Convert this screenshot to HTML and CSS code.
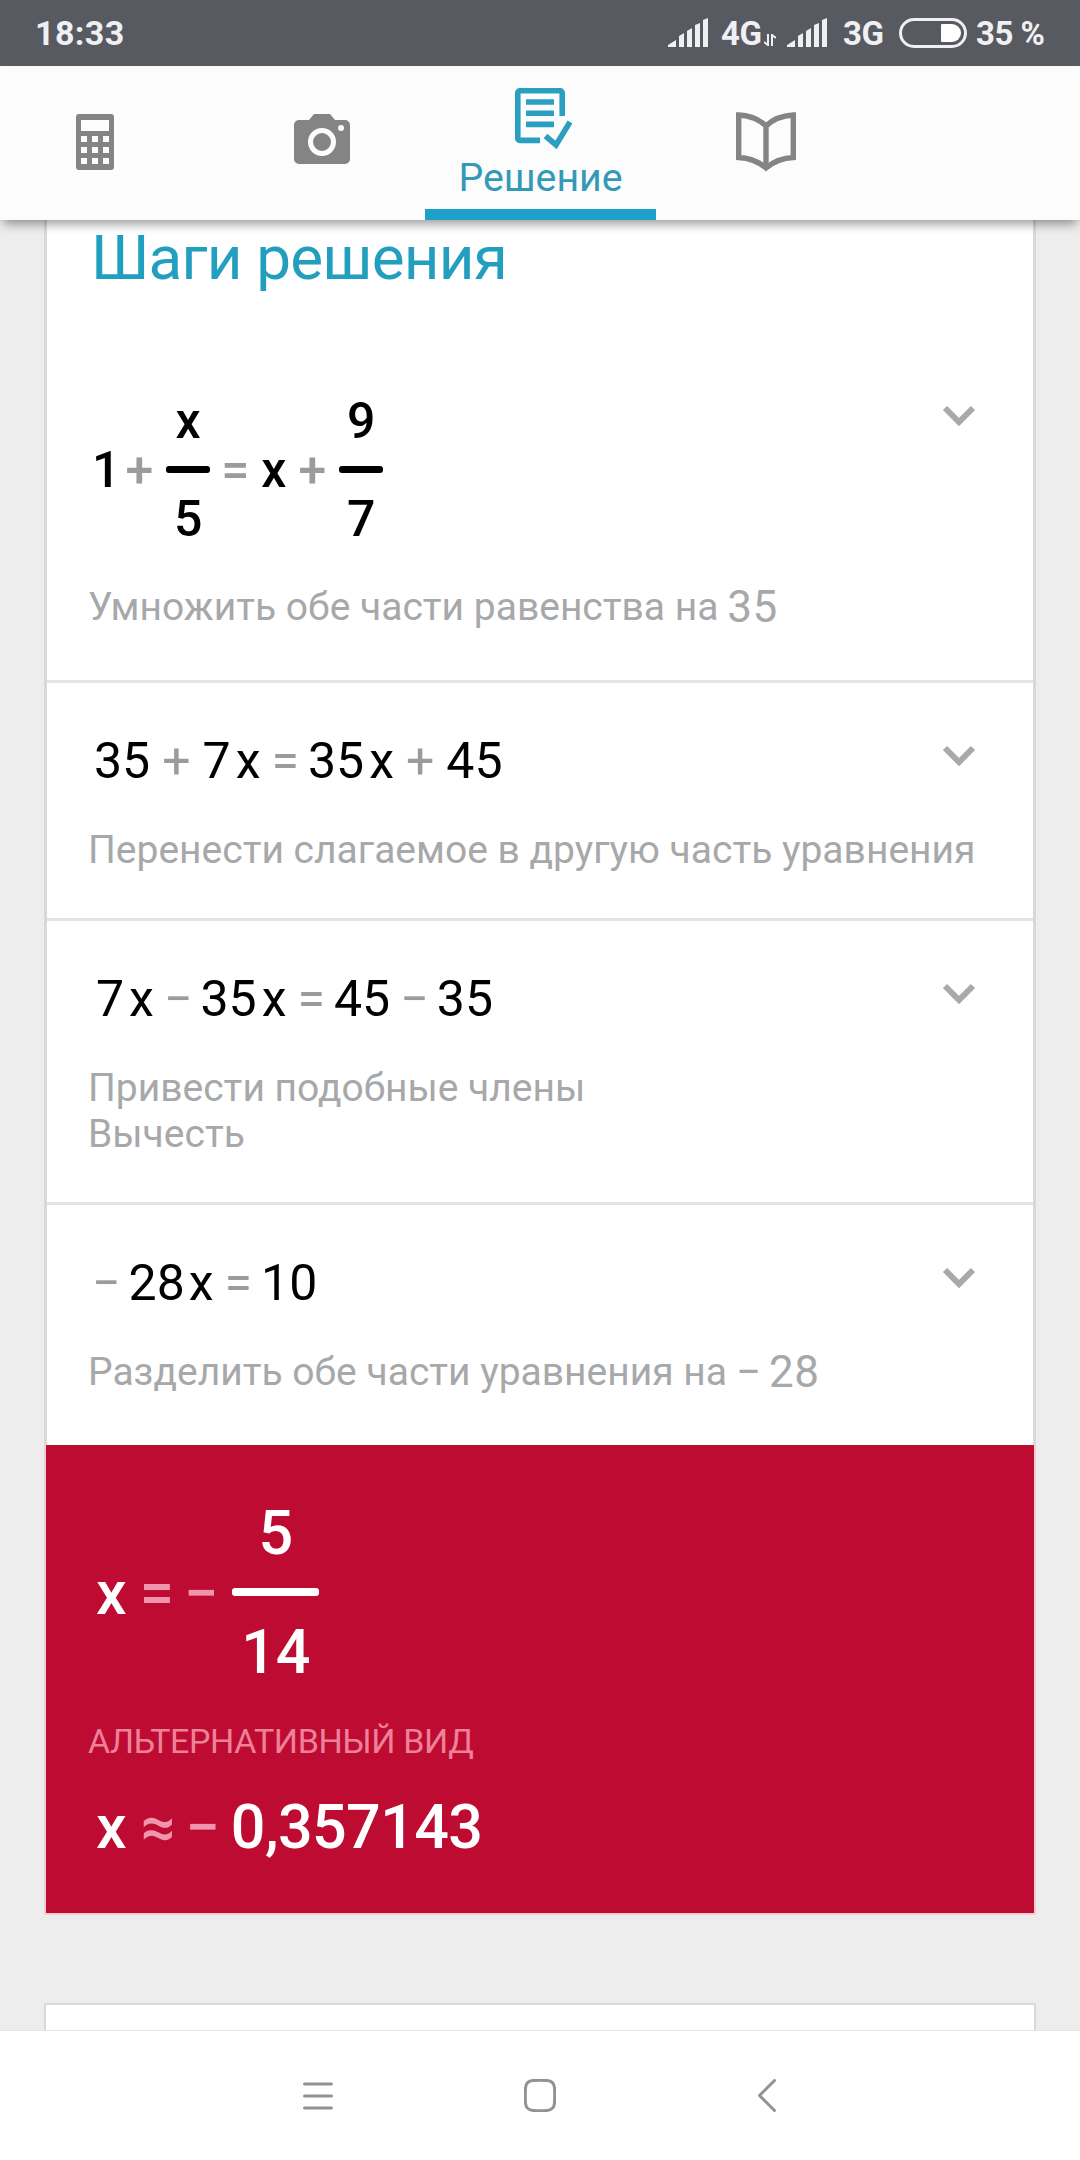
FILE: index.html
```
<!DOCTYPE html>
<html lang="ru">

<head>
    <meta charset="UTF-8">
    <title>Решение</title>
    <link rel="stylesheet" href="styles.css">
</head>

<body>

    <div class="status-bar">
        <span class="time">18:33</span>
        <svg class="signal" width="40" height="29" viewBox="0 0 40 29">
            <path d="M0 29V27L8 22V29ZM11 29V18L16 15V29ZM19 29V13L24 10V29ZM27 29V7L32 5V29ZM35 29V2L40 0V29Z" />
        </svg>
        <span class="net net-4g">4G</span>
        <svg class="updown" width="12" height="12" viewBox="0 0 12 12">
            <path d="M4 0V11L0 8M8 12V1L12 4" />
        </svg>
        <svg class="signal" width="40" height="29" viewBox="0 0 40 29">
            <path d="M0 29V27L8 22V29ZM11 29V18L16 15V29ZM19 29V13L24 10V29ZM27 29V7L32 5V29ZM35 29V2L40 0V29Z" />
        </svg>
        <span class="net net-3g">3G</span>
        <svg class="battery" width="68" height="30" viewBox="0 0 68 30">
            <rect x="1.5" y="1.5" width="65" height="27" rx="13.5" fill="none" stroke="#f0f0f2" stroke-width="3" />
            <path d="M43 6H53A9 9 0 0 1 53 24H43A1 1 0 0 1 42 23V7A1 1 0 0 1 43 6Z" fill="#fff" />
        </svg>
        <span class="net">35 %</span>
    </div>

    <div class="tabs">
        <div class="tab tab-calc">
            <svg width="38" height="56" viewBox="0 0 38 56">
                <rect width="38" height="56" rx="3" fill="#848484" />
                <path fill="#fcfcfc" d="M5 6H33V17H5ZM5 22H11V28H5ZM16 22H22V28H16ZM27 22H33V28H27ZM5 33H11V39H5ZM16 33H22V39H16ZM27 33H33V39H27ZM5 44H11V50H5ZM16 44H22V50H16ZM27 44H33V50H27Z" />
            </svg>
        </div>
        <div class="tab tab-camera">
            <svg width="56" height="50" viewBox="0 0 56 50">
                <path fill="#848484" d="M5 6H15L20 0H36L41 6H51A5 5 0 0 1 56 11V45A5 5 0 0 1 51 50H5A5 5 0 0 1 0 45V11A5 5 0 0 1 5 6Z" />
                <circle cx="28" cy="28" r="11.5" fill="none" stroke="#fcfcfc" stroke-width="5" />
                <circle cx="47" cy="14" r="3" fill="#fcfcfc" />
            </svg>
        </div>
        <div class="tab tab-active">
            <svg width="58" height="61" viewBox="0 0 58 61" fill="none" stroke="#2a9fc0" stroke-width="5.6">
                <path d="M25 52.4H4.8A2 2 0 0 1 2.8 50.4V4.8A2 2 0 0 1 4.8 2.8H45.2A2 2 0 0 1 47.2 4.8V28" />
                <path d="M11 14H39M11 25.2H39M11 36.4H39M30.5 48L41 57L55 34" />
            </svg>
            <span>Решение</span>
        </div>
        <div class="tab tab-book">
            <svg width="60" height="60" viewBox="0 0 60 60" fill="none" stroke="#848484" stroke-width="5.4">
                <path d="M2.7 3Q20 4 30 14Q40 4 57.3 3V45.5Q42 46 30 56Q18 46 2.7 45.5ZM30 13V56" />
            </svg>
        </div>
    </div>

    <div class="content">
        <div class="card steps">
            <h1 class="title">Шаги решения</h1>

            <div class="step">
                <div class="eq bold">
                    <span>1</span>
                    <i class="tight">+</i>
                    <span class="frac"><b>x</b><b class="den">5</b></span>
                    <i class="equal">=</i>
                    <span>x</span>
                    <i>+</i>
                    <span class="frac"><b>9</b><b class="den">7</b></span>
                </div>
                <p class="hint has-math">Умножить обе части равенства на <span>35</span></p>
                <svg class="arrow" width="34" height="22" viewBox="0 0 34 22"><path d="M3 3L17 17L31 3" /></svg>
            </div>

            <div class="step">
                <div class="eq">
                    <span>35</span><i class="plus">+</i><span>7</span><span class="var">x</span><i>=</i><span>35</span><span class="var">x</span><i class="plus">+</i><span>45</span>
                </div>
                <p class="hint">Перенести слагаемое в другую часть уравнения</p>
                <svg class="arrow" width="34" height="22" viewBox="0 0 34 22"><path d="M3 3L17 17L31 3" /></svg>
            </div>

            <div class="step">
                <div class="eq shift">
                    <span>7</span><span class="var">x</span><i class="minus">−</i><span>35</span><span class="var">x</span><i>=</i><span>45</span><i class="minus">−</i><span>35</span>
                </div>
                <p class="hint">Привести подобные члены<br>Вычесть</p>
                <svg class="arrow" width="34" height="22" viewBox="0 0 34 22"><path d="M3 3L17 17L31 3" /></svg>
            </div>

            <div class="step">
                <div class="eq">
                    <i class="minus first">−</i><span>28</span><span class="var">x</span><i>=</i><span>10</span>
                </div>
                <p class="hint has-math">Разделить обе части уравнения на <span>− 28</span></p>
                <svg class="arrow" width="34" height="22" viewBox="0 0 34 22"><path d="M3 3L17 17L31 3" /></svg>
            </div>
        </div>

        <div class="result">
            <div class="eq bold">
                <span>x</span>
                <i>=</i>
                <i>−</i>
                <span class="frac"><b>5</b><b class="den">14</b></span>
            </div>
            <p class="alt">АЛЬТЕРНАТИВНЫЙ ВИД</p>
            <div class="eq bold">
                <span>x</span>
                <i class="approx">≈</i>
                <i>−</i>
                <span class="decimal">0,357143</span>
            </div>
        </div>

        <div class="card next"></div>
    </div>

    <div class="nav">
        <svg width="30" height="28" viewBox="0 0 30 28"><path d="M1.5 2H28.5M1.5 14H28.5M1.5 26H28.5" /></svg>
        <svg width="32" height="33" viewBox="0 0 32 33"><path d="M9 1.5Q16 1 23 1.5Q30 2 30.5 9Q31 16.5 30.5 24Q30 31 23 31.5Q16 32 9 31.5Q2 31 1.5 24Q1 16.5 1.5 9Q2 2 9 1.5Z" /></svg>
        <svg width="20" height="33" viewBox="0 0 20 33"><path d="M17.5 1.5L2.5 16.5L17.5 31.5" /></svg>
    </div>

</body>

</html>
```
FILE: styles.css
```
* {
    margin: 0;
    padding: 0;
    box-sizing: border-box;
}

body {
    display: flex;
    flex-direction: column;
    width: 1080px;
    height: 2160px;
    overflow: hidden;
    background: #ededed;
    font-family: Roboto, "Noto Sans", sans-serif;
}

svg {
    display: block;
    flex: none;
}

/* status bar */
.status-bar {
    display: flex;
    flex: none;
    height: 66px;
    padding-left: 35px;
    background: #585a62;
    color: #f0f0f2;
    font-size: 33px;
    font-weight: 700;
    line-height: 67px;
    white-space: nowrap;
}

.time {
    width: 633px;
    font-size: 34px;
    letter-spacing: .4px;
}

.net {
    letter-spacing: -.5px;
}

.signal {
    margin-top: 18px;
    fill: #f0f0f2;
}

.net-4g {
    width: 43px;
    margin-left: 13px;
}

.updown {
    margin: 34px 11px 0 0;
    fill: none;
    stroke: #f0f0f2;
    stroke-width: 2;
}

.net-3g {
    width: 56px;
    margin-left: 16px;
}

.battery {
    margin: 18px 9px 0 0;
}

/* tabs */
.tabs {
    position: relative;
    z-index: 1;
    display: grid;
    grid-template-columns: 219px 206px 231px 220px;
    flex: none;
    height: 154px;
    background: #fcfcfc;
    box-shadow: 0 7px 10px -3px rgba(0, 0, 0, .4);
}

.tab {
    display: flex;
    flex-direction: column;
    align-items: center;
}

.tab-calc {
    padding: 48px 29px 0 0;
}

.tab-camera {
    padding-top: 48px;
}

.tab-active {
    padding-top: 22px;
    border-bottom: 11px solid #1ea1c8;
    color: #3499b7;
    font-size: 39.3px;
    line-height: 46px;
}

.tab-active svg {
    margin-left: 7px;
}

.tab-active span {
    margin-top: 6px;
}

.tab-book {
    padding-top: 46px;
}

/* content */
.content {
    flex: none;
    height: 1810px;
    padding: 0 44px;
    overflow: hidden;
}

.card {
    border: 2px solid #d8d8d8;
    background: #fff;
}

.steps {
    border-width: 0 3px;
    padding-top: 2px;
}

.title {
    margin: 0 0 49px 44px;
    color: #229ebf;
    font-size: 62px;
    font-weight: 400;
    line-height: 72px;
    letter-spacing: -.8px;
}

.step {
    position: relative;
    padding: 48px 0 45px 41px;
    border-bottom: 3px solid #e3e3e3;
}

.step:last-child {
    border-bottom: none;
}

.arrow {
    position: absolute;
    top: 62px;
    right: 57px;
    fill: none;
    stroke: #a8a9ab;
    stroke-width: 6;
}

.eq {
    display: flex;
    align-items: center;
    padding-left: 6px;
    font-size: 50px;
    line-height: 60px;
    white-space: nowrap;
}

.eq.shift {
    padding-left: 8px;
}

.eq i {
    margin: 0 9px 0 11px;
    color: #9b9b9b;
    font-style: normal;
}

.eq .plus {
    margin: 0 12px;
}

.eq .minus {
    margin: 0 8px 0 10px;
}

.eq .first {
    margin-left: -2px;
}

.var {
    margin-left: 5px;
}

.first ~ .var {
    margin-left: 4px;
}

.eq.bold {
    padding-left: 4px;
    font-weight: 500;
}

.eq.bold i {
    margin: 0 13px 0 12px;
}

.eq.bold .tight {
    margin-left: 5px;
}

.eq.bold .equal {
    margin: 0 12px 0 11px;
}

.frac {
    display: flex;
    flex-direction: column;
    align-items: center;
    min-width: 44px;
}

.frac b {
    font-weight: 500;
}

.frac::before {
    content: "";
    order: 1;
    align-self: stretch;
    height: 7px;
    margin: 15px 0 16px;
    border-radius: 3px;
    background: #000;
}

.frac .den {
    order: 2;
}

.hint {
    margin-top: 36px;
    color: #a7a8a9;
    font-size: 39px;
    line-height: 46px;
    white-space: nowrap;
}

.bold + .hint {
    margin-top: 35px;
}

.has-math {
    padding-bottom: 5px;
}

.has-math span {
    margin-left: -1px;
    font-size: 44px;
    line-height: 0;
    letter-spacing: .6px;
    word-spacing: -4px;
    vertical-align: -2px;
}

/* answer */
.result {
    height: 470px;
    padding: 52px 0 0 42px;
    border: 2px solid #f4cdd5;
    border-top: none;
    background: #be0b31;
    color: #fff;
}

.result .eq {
    padding-left: 8px;
    font-size: 61px;
    line-height: 72px;
}

.result .eq i {
    margin: 0 0 0 13px;
    color: #f195ac;
}

.result .eq .approx {
    margin-left: 14px;
}

.result .eq i + i {
    margin: 0 9px 0 10px;
}

.result .frac {
    min-width: 87px;
    margin-left: 5px;
}

.result .frac::before {
    height: 8px;
    margin: 19px 0 20px;
    background: #fff;
}

.decimal {
    margin-left: 2px;
    letter-spacing: -.6px;
}

.alt {
    margin: 33px 0 30px;
    color: #ee819a;
    font-size: 34px;
    line-height: 40px;
    letter-spacing: -.4px;
}

.next {
    height: 100px;
    margin-top: 88px;
}

/* bottom buttons */
.nav {
    display: grid;
    grid-template-columns: 220px 224px 230px;
    align-items: center;
    justify-items: center;
    flex: none;
    height: 130px;
    padding-left: 208px;
    border-top: 1px solid #e5e5e5;
    background: #fff;
}

.nav svg {
    fill: none;
    stroke: #929292;
    stroke-width: 3;
    stroke-linecap: round;
    stroke-linejoin: round;
}
```
